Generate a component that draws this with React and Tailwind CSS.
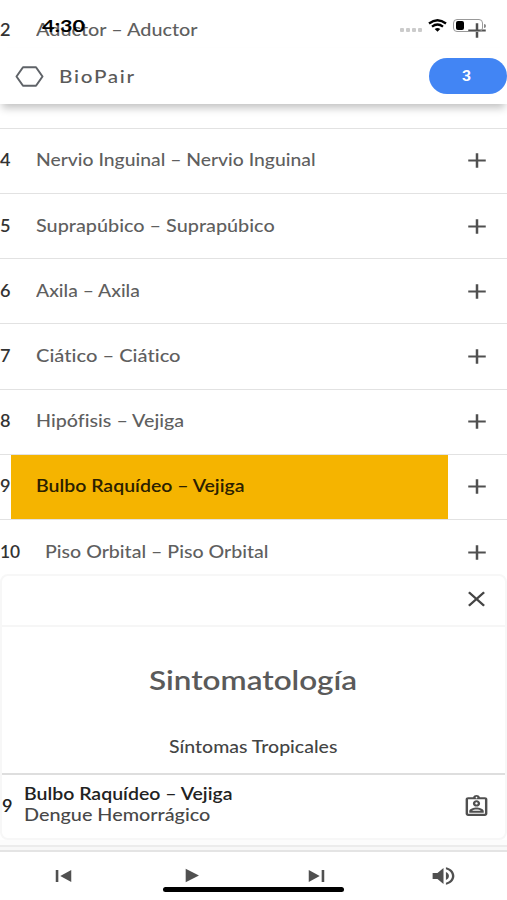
import React, { useLayoutEffect, useRef, useState } from 'react';
import {
  MdAdd,
  MdClose,
  MdSkipPrevious,
  MdSkipNext,
  MdPlayArrow,
  MdVolumeUp,
  MdOutlineAssignmentInd,
} from 'react-icons/md';

const pairs = [
  { id: 2, name: 'Aductor – Aductor', width: 162 },
  { id: 3, name: 'Recto – Recto', width: 110 },
  { id: 4, name: 'Nervio Inguinal – Nervio Inguinal', width: 280 },
  { id: 5, name: 'Suprapúbico – Suprapúbico', width: 239 },
  { id: 6, name: 'Axila – Axila', width: 104 },
  { id: 7, name: 'Ciático – Ciático', width: 144 },
  { id: 8, name: 'Hipófisis – Vejiga', width: 148 },
  { id: 9, name: 'Bulbo Raquídeo – Vejiga', width: 209, active: true },
  { id: 10, name: 'Piso Orbital – Piso Orbital', width: 223 },
];

// Widens a line of text so that it fills the given width
const FitText = ({ width, className = '', children }) => {
  const ref = useRef(null);
  const [scale, setScale] = useState(1);

  useLayoutEffect(() => {
    if (ref.current.offsetWidth) setScale(width / ref.current.offsetWidth);
  }, [width, children]);

  return (
    <span className={`block shrink-0 ${className}`} style={{ width }}>
      <span
        ref={ref}
        className="inline-block whitespace-nowrap origin-left"
        style={{ transform: `scaleX(${scale})` }}
      >
        {children}
      </span>
    </span>
  );
};

const PairRow = ({ pair }) => (
  <li className="flex h-[65.2px] shrink-0 border-b border-[#e2e2e2] leading-6">
    <div className={`flex items-center shrink-0 pb-px ${pair.id > 9 ? 'w-5' : 'w-[11px]'}`}>
      <FitText width={pair.id > 9 ? 20 : 11} className="font-semibold text-[#333]">
        {pair.id}
      </FitText>
    </div>
    <div
      className={`flex flex-1 items-center pl-[24.5px] pb-px ${
        pair.active ? 'bg-[#f5b400] text-[#2b2000] font-semibold' : 'text-[#5f5f5f] font-medium'
      }`}
    >
      <FitText width={pair.width}>{pair.name}</FitText>
    </div>
    <button className="flex w-[59px] shrink-0 items-center justify-center pr-px text-[#505050]" title="Agregar">
      <MdAdd preserveAspectRatio="none" className="h-[25px] w-[30px]" />
    </button>
  </li>
);

const StatusBar = () => (
  <div className="absolute inset-x-0 top-0 z-20 flex h-12 items-start justify-between pl-[42px] pr-[21px] pt-[17px]">
    <FitText width={43} className="-mt-px text-[17px] leading-[19px] font-bold text-black">
      4:30
    </FitText>
    <div className="flex pt-[2px]">
      <div className="mr-[6px] mt-[9px] flex gap-[2px]">
        {[0, 1, 2, 3].map((dot) => (
          <span key={dot} className="size-1 rounded-[1px] bg-[#cbcbcb]" />
        ))}
      </div>
      <svg className="mr-[6px] h-[13px] w-[19px]" viewBox="0 0 19 13" fill="none" stroke="#000" strokeWidth="2.3">
        <path d="M1 4.5Q9.5-2 18 4.5" />
        <path d="M4 7.7Q9.5 3.3 15 7.7" />
        <path d="M6.7 10Q9.5 7.8 12.3 10L9.5 12.8Z" fill="#000" stroke="none" />
      </svg>
      <div className="flex items-center">
        <div className="h-[13px] w-[30px] rounded-[4px] border border-[#999] p-px pl-[2px]">
          <div className="h-full w-[8px] rounded-[2px] bg-black" />
        </div>
        <span className="ml-px h-1 w-[2px] rounded-r bg-[#888]" />
      </div>
    </div>
  </div>
);

const Header = () => (
  <header className="absolute inset-x-0 top-[48px] z-10 flex h-[56px] items-center bg-white pl-[15px] shadow-[0_6px_8px_-2px_rgba(0,0,0,0.24)]">
    <svg className="h-[21px] w-[29px]" viewBox="0 0 29 21" fill="none" stroke="#5f6368" strokeWidth="2">
      <path d="M8 1.2h13l6.5 9.3-6.5 9.3H8L1.5 10.5Z" strokeLinejoin="round" />
    </svg>
    <FitText width={77} className="ml-[15px] text-[18px] tracking-[1.5px] font-medium text-[#5a5a5a]">
      BioPair
    </FitText>
    <div className="ml-auto flex h-9 w-[78px] items-center justify-center rounded-full bg-[#4285f4] text-white">
      <FitText width={9} className="-ml-1 font-['Roboto',sans-serif] text-[14px] font-bold">
        3
      </FitText>
    </div>
  </header>
);

const SymptomSheet = () => (
  <div className="absolute inset-x-0 top-[574px] z-10 h-[277px]">
    <section className="flex h-[266px] flex-col rounded-lg border-2 border-[#f7f7f7] bg-white">
      <div className="flex h-[51px] items-center justify-end border-b-2 border-[#f6f6f6] pr-[14px] pb-[3px] text-[#454545]">
        <MdClose preserveAspectRatio="none" className="h-[26px] w-[29px]" />
      </div>
      <div className="flex h-[148px] flex-col items-center border-b-2 border-[#dedede]">
        <FitText width={208} className="mt-[33px] -ml-px text-[26px] leading-10 font-semibold text-[#5a5a5a]">
          Sintomatología
        </FitText>
        <FitText width={169} className="mt-[35px] leading-6 font-medium text-[#444]">
          Síntomas Tropicales
        </FitText>
      </div>
      <div className="flex flex-1 items-center pr-[14px]">
        <FitText width={11} className="font-semibold text-[#222]">
          9
        </FitText>
        <div className="ml-[11px] mb-[3px] leading-[21px]">
          <FitText width={209} className="font-semibold text-[#222]">
            Bulbo Raquídeo – Vejiga
          </FitText>
          <FitText width={186} className="font-medium text-[#484848]">
            Dengue Hemorrágico
          </FitText>
        </div>
        <MdOutlineAssignmentInd
          preserveAspectRatio="none"
          className="ml-auto h-[25px] w-[29px] text-[#505050]"
        />
      </div>
    </section>
    <div className="h-[5px] bg-[#fcfcfc]" />
    <div className="h-[6px] border-t-2 border-[#ececec] bg-[#f8f8f8]" />
  </div>
);

const Player = () => (
  <footer className="absolute inset-x-0 bottom-0 z-20 h-[50px] border-t-2 border-[#e4e4e4] bg-white text-[#505050]">
    <div className="grid grid-cols-4 justify-items-center pt-[12px]">
      <MdSkipPrevious preserveAspectRatio="none" className="h-[24px] w-[31px]" />
      <MdPlayArrow preserveAspectRatio="none" className="h-[23px] w-[29px]" />
      <MdSkipNext preserveAspectRatio="none" className="h-[24px] w-[31px]" />
      <MdVolumeUp preserveAspectRatio="none" className="h-[24px] w-[29px]" />
    </div>
    {/* Home indicator */}
    <div className="absolute left-[163px] top-[35px] h-[5px] w-[181px] rounded-full bg-black" />
  </footer>
);

const App = () => {
  return (
    <div className="relative flex h-[900px] w-[507px] flex-col overflow-hidden bg-white font-['Lato',sans-serif] text-[16.5px] [font-variant-ligatures:none]">
      <StatusBar />
      <Header />
      <ul className="-mt-[1.5px] flex flex-col">
        {pairs.map((pair) => (
          <PairRow key={pair.id} pair={pair} />
        ))}
      </ul>
      <SymptomSheet />
      <Player />
    </div>
  );
};

export default App;
